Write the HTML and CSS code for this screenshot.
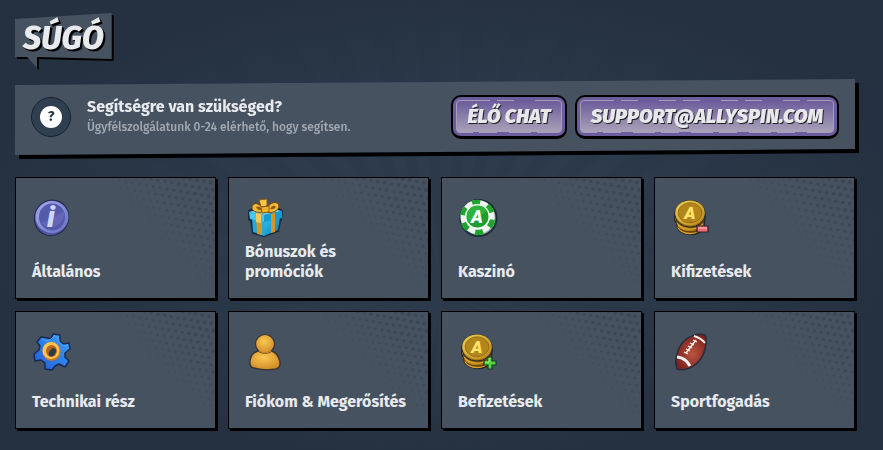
FILE: index.html
```html
<!DOCTYPE html>
<html lang="hu">
<head>
<meta charset="utf-8">
<meta name="viewport" content="width=device-width, initial-scale=1">
<title>Súgó</title>
<link rel="stylesheet" href="styles.css">
</head>
<body>
<svg class="defs" aria-hidden="true">
  <defs>
    <symbol id="halftone" viewBox="0 0 110 120"><g id="dots"></g></symbol>
    <linearGradient id="gold" x1="0" y1="0" x2="1" y2="0">
      <stop offset="0" stop-color="#e0b02c"/><stop offset=".5" stop-color="#b27c14"/><stop offset="1" stop-color="#6f450c"/>
    </linearGradient>
    <linearGradient id="goldFace" x1="0" y1="0" x2="1" y2="1">
      <stop offset="0" stop-color="#f3d550"/><stop offset="1" stop-color="#b98718"/>
    </linearGradient>
    <linearGradient id="violet" x1="0" y1="0" x2="1" y2="1">
      <stop offset="0" stop-color="#a3a9ed"/><stop offset="1" stop-color="#6a6fc4"/>
    </linearGradient>
    <radialGradient id="amber" cx=".45" cy=".35" r=".7">
      <stop offset="0" stop-color="#f9c951"/><stop offset="1" stop-color="#cf8726"/>
    </radialGradient>
    <linearGradient id="blue" x1="1" y1="0" x2="0" y2="1">
      <stop offset="0" stop-color="#3aa4f8"/><stop offset="1" stop-color="#2459d8"/>
    </linearGradient>
    <linearGradient id="cyan" x1="0" y1="0" x2="1" y2="1">
      <stop offset="0" stop-color="#35c0ea"/><stop offset="1" stop-color="#087db8"/>
    </linearGradient>
    <radialGradient id="leather" cx=".55" cy=".55" r=".55">
      <stop offset="0" stop-color="#b9533f"/><stop offset="1" stop-color="#7d241e"/>
    </radialGradient>
    <symbol id="coins" viewBox="0 0 40 40">
      <path d="M6 26C6 41 33 41 35 28L36 16 4 15V22C4 24 6 25 6 26Z" fill="url(#gold)" stroke="#202832" stroke-width="1.500"/>
      <path d="M6 28C12 37 29 37 35 28M5 22C11 32 29 32 35 23" fill="none" stroke="#633e0b" stroke-width="1.500"/>
      <path d="M7 30C13 39 28 38 34 30M6 25C13 34 26 34 34 26" fill="none" stroke="#dda72b" stroke-width="1.200"/>
      <ellipse cx="20" cy="15.500" rx="16" ry="14" fill="#a87415" stroke="#202832" stroke-width="1"/>
      <ellipse cx="20" cy="14.500" rx="15.500" ry="13" fill="url(#goldFace)"/>
      <ellipse cx="20" cy="14.500" rx="12.500" ry="10.500" fill="#b3861c" stroke="#8a6213" stroke-width=".8"/>
      <text x="20" y="21" class="coin-letter">A</text>
    </symbol>
  </defs>
</svg>

<main class="page">
  <h1 class="bubble"><span class="bubble-shape">Súgó</span></h1>

  <section class="banner">
    <div class="banner-body">
      <div class="help-icon"><span>?</span></div>
      <div class="banner-text">
        <h2>Segítségre van szükséged?</h2>
        <p>Ügyfélszolgálatunk 0-24 elérhető, hogy segítsen.</p>
      </div>
      <div class="actions">
        <button class="btn" type="button"><span>Élő chat</span></button>
        <a class="btn" href="mailto:support@allyspin.com"><span>support@allyspin.com</span></a>
      </div>
    </div>
  </section>

  <nav class="grid" aria-label="Súgó">
    <a class="card" href="#altalanos">
      <svg class="dots"><use href="#halftone"/></svg>
      <svg class="icon" viewBox="0 0 40 40">
        <ellipse cx="19.500" cy="20" rx="17" ry="18" transform="rotate(25 20 20)" fill="#4f53a0" stroke="#202a46"/>
        <ellipse cx="20" cy="19" rx="16.500" ry="16" fill="url(#violet)"/>
        <ellipse cx="20" cy="19" rx="13" ry="13.500" fill="#5459a8"/>
        <path d="M9 25Q20 21 32 13A13.500 13.500 0 0 1 9 25Z" fill="#6166b6"/>
        <text x="19" y="29" class="info-letter">i</text>
      </svg>
      <span class="card-title">Általános</span>
    </a>
    <a class="card" href="#bonuszok">
      <svg class="dots"><use href="#halftone"/></svg>
      <svg class="icon" viewBox="0 0 40 40">
        <path d="M4 13 15 6 34 11 37 13 36 22 35 23 33 33 19 38 8 35 6 23 4 21Z" fill="#142a40" stroke="#142a40" stroke-width="2" stroke-linejoin="round"/>
        <path d="M7 20 19 23V38L8 34Z" fill="#25a8db"/>
        <path d="M19 23 35 19 33 32 19 38Z" fill="url(#cyan)"/>
        <path d="M4 14 19 17V24L5 21Z" fill="#45c8ed"/>
        <path d="M19 17 37 13V20L19 24Z" fill="#159bd0"/>
        <path d="M4 14 19 9 37 13 19 17Z" fill="#65d3ee"/>
        <path d="M11 15 17 16V37L12 36ZM26 16 30 15V34L26 35Z" fill="#d99521"/>
        <path d="M11 15 16 16V25L11 24Z" fill="#f8ca52"/>
        <path d="M19 12C14 4 8 4 7 9 6 14 15 16 20 13ZM21 12C24 4 33 2 34 8 34 13 26 16 21 14Z" fill="#f2b936" stroke="#71460e"/>
        <path d="M11 9Q15 7 17 12 13 13 11 9ZM25 11Q28 5 31 9 29 12 25 11Z" fill="#8f5b12"/>
        <path d="M14 2 22 1 22 8 16 9Z" fill="#f8c744" stroke="#8b5a13"/>
        <path d="M16 9 24 8 24 14 17 15Z" fill="#efb12d" stroke="#8b5a13"/>
      </svg>
      <span class="card-title">Bónuszok és promóciók</span>
    </a>
    <a class="card" href="#kaszino">
      <svg class="dots"><use href="#halftone"/></svg>
      <svg class="icon" viewBox="0 0 40 40">
        <circle cx="20.500" cy="20" r="18" fill="#a5acb1" stroke="#1c2d3c" stroke-width="2"/>
        <circle cx="19.500" cy="19" r="17" fill="#eef3ef"/>
        <circle cx="19.500" cy="19.500" r="15" fill="none" stroke="#20a52c" stroke-width="5.500" stroke-dasharray="8 7.700" transform="rotate(8 19.500 19.500)"/>
        <circle cx="19.500" cy="18.500" r="12.500" fill="#f5fff5"/>
        <circle cx="19.500" cy="18.500" r="11" fill="#1b9e2e"/>
        <path d="M9 16A11 11 0 0 1 29 13Q20 20 10 24Z" fill="#2db23c"/>
        <text x="19" y="25" class="chip-letter">A</text>
      </svg>
      <span class="card-title">Kaszinó</span>
    </a>
    <a class="card" href="#kifizetesek">
      <svg class="dots"><use href="#halftone"/></svg>
      <svg class="icon" viewBox="0 0 40 40">
        <use href="#coins" y="1" width="38" height="38"/>
        <path d="M26 28H37V34H26Z" fill="#f46a74" stroke="#35222c" stroke-width="1.200"/>
        <path d="M27 29H36V31H27Z" fill="#ff949b"/>
      </svg>
      <span class="card-title">Kifizetések</span>
    </a>
    <a class="card" href="#technikai">
      <svg class="dots"><use href="#halftone"/></svg>
      <svg class="icon" viewBox="0 0 40 40">
        <path d="M16 6 19 7 21 2 28 3 28 9 31 12 37 11 38 17 33 21 33 25 37 29 33 35 27 32 23 34 20 38 13 37 13 31 9 28 3 29 2 22 7 18 8 14 5 10 9 5Z" fill="url(#blue)" stroke="#162b54" stroke-width="1.500" stroke-linejoin="round"/>
        <path d="M10 7 14 9 18 8 22 4 26 5 27 10 32 14 36 13" fill="none" stroke="#4ba4f5"/>
        <ellipse cx="19.500" cy="19.500" rx="9" ry="9.500" fill="#c67a21"/>
        <ellipse cx="19" cy="18.500" rx="8.500" ry="8.500" fill="#ffc653"/>
        <ellipse cx="19.500" cy="19" rx="5.500" ry="6" fill="#b3681f"/>
        <ellipse cx="20.500" cy="20" rx="3" ry="4.500" fill="#313b46" transform="rotate(35 20 20)"/>
      </svg>
      <span class="card-title">Technikai rész</span>
    </a>
    <a class="card" href="#fiokom">
      <svg class="dots"><use href="#halftone"/></svg>
      <svg class="icon" viewBox="0 0 40 40">
        <path d="M14 19C4 20 2 36 9 36 14 38 26 38 31 37 39 35 34 22 27 19Z" fill="url(#amber)" stroke="#3c3632" stroke-width="1.500"/>
        <circle cx="20" cy="12" r="9.500" fill="url(#amber)" stroke="#3c3632" stroke-width="1.200"/>
        <path d="M14 19Q20 23 26 19" fill="none" stroke="#c98428" stroke-width="1.500"/>
      </svg>
      <span class="card-title">Fiókom &amp; Megerősítés</span>
    </a>
    <a class="card" href="#befizetesek">
      <svg class="dots"><use href="#halftone"/></svg>
      <svg class="icon" viewBox="0 0 40 40">
        <use href="#coins" y="1" width="38" height="38"/>
        <path d="M30 25H34V29H38V33H34V37H30V33H26V29H30Z" fill="#52d83c" stroke="#173b2a" stroke-width="1.200"/>
        <path d="M31 26V30H27" fill="none" stroke="#a0ff7a"/>
      </svg>
      <span class="card-title">Befizetések</span>
    </a>
    <a class="card" href="#sportfogadas">
      <svg class="dots"><use href="#halftone"/></svg>
      <svg class="icon" viewBox="0 0 40 40">
        <path d="M6 37C3 29 6 17 12 10 19 3 28 1 34 3 37 10 34 22 28 29 21 37 12 39 6 37Z" fill="url(#leather)" stroke="#272c3c" stroke-width="1.500"/>
        <path d="M6 25Q15 26 19 34" fill="none" stroke="#f4eeee" stroke-width="3"/>
        <path d="M23 4Q30 6 34 11" fill="none" stroke="#f4eeee" stroke-width="2"/>
        <path d="M15 21 25 8" stroke="#f6e9e5" stroke-width="1.500"/>
        <path d="M13 20 17 22M15 17 19 19M17 14 21 16M19 11 23 13M22 8 26 10" stroke="#f6e9e5" stroke-width="1.300"/>
      </svg>
      <span class="card-title">Sportfogadás</span>
    </a>
  </nav>
</main>
<script src="halftone.js"></script>
</body>
</html>
```
FILE: styles.css
```css
* { box-sizing: border-box; }

body {
  margin: 0;
  min-height: 100vh;
  font-family: "Fira Sans", "Noto Sans", sans-serif;
  color: #e8ebee;
  background:
    radial-gradient(ellipse at 50% 50%, transparent 30%, #253140 75%),
    repeating-conic-gradient(from 0deg at 50% 65%, #ffffff03 0deg 4deg, transparent 5deg 9deg, #ffffff03 10deg),
    #2b394a;
}

h1, h2, p { margin: 0; }

.defs { position: absolute; width: 0; height: 0; }

.page { padding: 13px 28px 20px 15px; }

.bubble {
  width: max-content;
  filter: drop-shadow(2px 2px 0 #000);
}

.bubble-shape {
  display: block;
  padding: 5px 8px 10px;
  font: italic 800 32px/40px "Fira Sans", "Noto Sans", sans-serif;
  text-transform: uppercase;
  text-shadow: 1px 1px 0 #000, 2px 2px 0 #000;
  background: #465260;
  clip-path: polygon(0 6px, 100% 0, 100% calc(100% - 9px), 22px calc(100% - 11px), 22px 100%, 12px calc(100% - 11px), 0 calc(100% - 11px));
}

.banner {
  margin-top: 11px;
  filter: drop-shadow(4px 4px 0 #000);
}

.banner-body {
  display: flex;
  align-items: center;
  min-height: 76px;
  padding: 0 16px;
  background: #465260;
  clip-path: polygon(0 6px, 100% 0, 100% calc(100% - 6px), 0 100%);
}

.help-icon {
  display: grid;
  place-items: center;
  flex: none;
  width: 40px;
  height: 40px;
  border: 1px solid #17212e;
  border-radius: 50%;
  background: #303f50;
}

.help-icon span {
  width: 22px;
  border-radius: 50%;
  font-size: 14px;
  font-weight: 700;
  line-height: 22px;
  text-align: center;
  color: #26323f;
  background: #fff;
}

.banner-text {
  flex: 1;
  margin-left: 16px;
  white-space: nowrap;
}

.banner-text h2 {
  font-size: 16px;
  font-weight: 700;
  line-height: 20px;
}

.banner-text p {
  font-size: 12px;
  font-weight: 500;
  line-height: 20px;
  color: #a2a9b2;
}

.actions { display: flex; gap: 8px; }

.btn {
  position: relative;
  padding: 3px;
  border: 2px solid #000;
  border-bottom-width: 3px;
  border-radius: 10px;
  font: italic 900 20px/31px "Fira Sans", "Noto Sans", sans-serif;
  text-transform: uppercase;
  text-decoration: none;
  white-space: nowrap;
  color: #e8e8ec;
  background: #6b5c9b;
  cursor: pointer;
}

.btn span {
  display: block;
  padding: 0 10px;
  border: 1px solid #a69dbd;
  border-radius: 4px;
  text-shadow: 1px 1px 0 #222;
  background: linear-gradient(#6b5c9b, #a9a1b8);
}

/* Worn gaps in the inner frame, top and bottom */
.btn::before,
.btn::after {
  content: "";
  position: absolute;
  left: 20px;
  right: 20px;
  height: 1px;
}

.btn::before {
  top: 3px;
  background: repeating-linear-gradient(90deg, transparent 0 17px, #6b5c9b 17px 24px, transparent 24px 41px, #6b5c9b 41px 62px);
}

.btn::after {
  bottom: 3px;
  background: repeating-linear-gradient(90deg, #6b5c9b 0 6px, transparent 6px 24px, #6b5c9b 24px 36px, transparent 36px 58px);
}

.grid {
  display: grid;
  grid-template-columns: repeat(4, 1fr);
  gap: 12px;
  margin-top: 22px;
}

.card {
  position: relative;
  display: flex;
  flex-direction: column;
  justify-content: space-between;
  gap: 4px;
  min-height: 118px;
  padding: 20px 16px 16px;
  border: 1px solid #000;
  color: inherit;
  text-decoration: none;
  background: #465260;
  box-shadow: 2px 2px 0 #000;
}

.dots {
  position: absolute;
  top: 0;
  right: 0;
  width: 110px;
  height: 120px;
  max-height: 100%;
  fill: #394553;
}

.icon { width: 40px; height: 40px; }

.card-title {
  font-size: 16px;
  font-weight: 700;
  line-height: 20px;
}

.coin-letter, .chip-letter, .info-letter {
  font-family: Roboto, sans-serif;
  font-style: italic;
  font-weight: 900;
  text-anchor: middle;
}

.coin-letter { font-size: 18px; fill: #ffe36a; }
.chip-letter { font-size: 18px; fill: #fff; }
.info-letter { font-size: 30px; fill: #cfd5fb; }
```
FILE: halftone.js
```js
// Tilted dot grid whose dots shrink towards the lower-left diagonal.
const group = document.getElementById("dots");
const angle = 10 * Math.PI / 180;
const step = 7;
for (let row = -6; row < 22; row++) {
  for (let col = -4; col < 24; col++) {
    const u = (col + (row % 2 ? 0.5 : 0)) * step;
    const v = row * step;
    const x = u * Math.cos(angle) - v * Math.sin(angle);
    const y = u * Math.sin(angle) + v * Math.cos(angle);
    const depth = (x - 4) * 0.73 - (y - 4) * 0.68;
    if (depth <= 0 || x > 112 || y < -2) continue;
    const dot = document.createElementNS("http://www.w3.org/2000/svg", "circle");
    dot.setAttribute("cx", x.toFixed(1));
    dot.setAttribute("cy", y.toFixed(1));
    dot.setAttribute("r", Math.min(2, 0.9 + depth / 60).toFixed(2));
    dot.setAttribute("opacity", Math.min(0.8, 0.2 + depth / 70).toFixed(2));
    group.appendChild(dot);
  }
}
```
